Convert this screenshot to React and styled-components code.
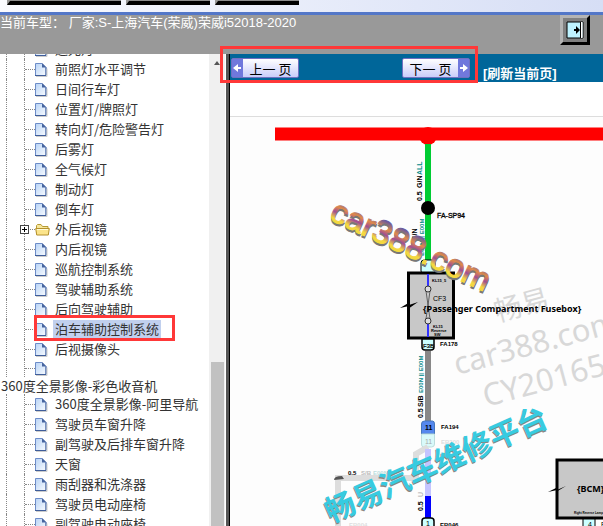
import React from 'react';
import styled, { createGlobalStyle } from 'styled-components';

const GlobalStyle = createGlobalStyle`
    * {
        box-sizing: border-box;
    }

    body {
        margin: 0;
        background: #fff;
        font-family: 'Liberation Sans', 'Noto Sans CJK SC', sans-serif;
        font-size: 13px;
        color: #333;
    }
`;

const Page = styled.div`
    display: flex;
    flex-direction: column;
    height: 100vh;
    overflow: hidden;
`;

const TopStrip = styled.nav`
    display: flex;
    gap: 5px;
    flex: none;
    height: 15px;
    padding-left: 7px;
    background: linear-gradient(90deg, #fafbff, #d6def5);
    border-bottom: 3px solid #5377c8;
`;

const TabButton = styled.button`
    width: ${props => props.width};
    height: 5px;
    padding: 0;
    background: #8c8c8c;
    border: 0;
    border-bottom: 4px solid #000;
    border-left: 3px solid #999;
`;

const VehicleBar = styled.header`
    display: flex;
    justify-content: space-between;
    flex: none;
    height: 39px;
    padding-right: 13px;
    background: #999;
    color: #fff;
    line-height: 15px;
    white-space: pre;
`;

const ExitButton = styled.button`
    width: 30px;
    height: 30px;
    padding: 3px;
    background: #808080;
    border: 3px solid;
    border-color: #b4b4b4 #000 #000 #b4b4b4;

    svg {
        display: block;
    }
`;

const Frames = styled.div`
    display: flex;
    flex: 1;
    min-height: 0;
`;

const TreeFrame = styled.aside`
    display: flex;
    flex: none;
    width: 230px;
    border-right: 1px solid #000;
    box-shadow: inset -3px 0 #555;
`;

const TreeView = styled.div`
    flex: 1;
    overflow: hidden;
`;

const TreeList = styled.ul`
    margin: -15px 0 0;
    padding: 0;
    list-style: none;
    font-family: 'Noto Sans CJK SC', sans-serif;
`;

const TreeItem = styled.li`
    position: relative;
    display: flex;
    align-items: center;
    height: ${props => props.$short ? '18px' : '20px'};
    padding-left: 6px;
    white-space: nowrap;
`;

const Guides = styled.span`
    flex: none;
    align-self: stretch;
    width: 19px;
    border-left: 1px dotted #888;
    border-right: 1px dotted #888;
`;

const Branch = styled.span`
    flex: none;
    width: 10px;
    margin-top: 1px;
    border-top: 1px dotted #888;
`;

const Expander = styled.button`
    position: absolute;
    left: 20px;
    top: 6px;
    width: 9px;
    height: 9px;
    padding: 0;
    background: #fff;
    border: 1px solid #444;

    svg {
        display: block;
    }
`;

const TreeLink = styled.a`
    margin-left: ${props => props.$folder ? '2px' : '5px'};
    padding: 0 2px;
    line-height: 18px;
    color: #333;
    text-decoration: none;
    background: ${props => props.$selected ? '#c1d0ee' : 'transparent'};
`;

const WrappedLink = styled(TreeLink)`
    display: block;
    margin: 0;
    padding: 0 1px;
    line-height: 17px;
`;

const ScrollTrack = styled.div`
    flex: none;
    display: flex;
    flex-direction: column;
    align-items: center;
    width: 16px;
    margin-right: 4px;
    padding-top: 7px;
    background: #f0f0f0;
`;

const ScrollArrow = styled.span`
    border: 3px solid transparent;
    border-top: 0;
    border-bottom: 4px solid #555;
`;

const ScrollThumb = styled.div`
    width: 13px;
    flex: 1;
    margin-top: 297px;
    background: #c1c1c1;
`;

const DiagramFrame = styled.main`
    flex: 1;
    min-width: 0;
`;

const Canvas = styled.div`
    overflow: hidden;
    background: #fdfdfd;
`;

const Toolbar = styled.div`
    position: relative;
    display: flex;
    align-items: center;
    height: 28px;
    padding-left: 1px;
    background: #069;
`;

const PageButton = styled.button`
    display: flex;
    align-items: center;
    width: 68px;
    height: 20px;
    margin-right: ${props => props.$gap || '0'};
    padding: 0;
    font: 13px 'Noto Sans CJK SC', sans-serif;
    white-space: pre;
    color: #000;
    background: linear-gradient(#fff, #c9cdfa);
    border: 1px solid #7070c0;
    border-radius: 2px;

    svg {
        flex: none;
    }
`;

const PageLabel = styled.span`
    flex: 1;
    text-align: center;
`;

const RefreshLink = styled.a`
    margin-top: 8px;
    color: #fff;
    font-size: 13px;
    font-weight: bold;
    text-decoration: none;
    white-space: nowrap;
`;

const Spacer = styled.div`
    height: 35px;
    background: #fff;
    border-bottom: 1px solid #ddd;
`;

const Highlight = styled.span`
    position: absolute;
    left: ${props => props.$left};
    top: ${props => props.$top};
    width: ${props => props.$width};
    height: ${props => props.$height};
    border: 3px solid #ff3838;
    pointer-events: none;
    z-index: 1;
`;

const Diagram = styled.svg`
    display: block;
    width: 400px;
    height: 440px;
    font-family: 'Liberation Sans', sans-serif;
`;

const items = [
    { name: '近光灯' },
    { name: '前照灯水平调节' },
    { name: '日间行车灯' },
    { name: '位置灯/牌照灯' },
    { name: '转向灯/危险警告灯' },
    { name: '后雾灯' },
    { name: '全气候灯' },
    { name: '制动灯' },
    { name: '倒车灯' },
    { name: '外后视镜', folder: true },
    { name: '内后视镜' },
    { name: '巡航控制系统' },
    { name: '驾驶辅助系统' },
    { name: '后向驾驶辅助' },
    { name: '泊车辅助控制系统', selected: true },
    { name: '后视摄像头' },
    { name: '360度全景影像-彩色收音机', wrapped: true },
    { name: '360度全景影像-阿里导航' },
    { name: '驾驶员车窗升降' },
    { name: '副驾驶及后排车窗升降' },
    { name: '天窗' },
    { name: '雨刮器和洗涤器' },
    { name: '驾驶员电动座椅' },
    { name: '副驾驶电动座椅' },
];

const PageIcon = () => (
    <svg width="13" height="15" viewBox="0 0 13 15">
        <defs>
            <linearGradient id="paper" x1="0" y1="0" x2="1" y2="1">
                <stop offset="0" stopColor="#b9d4f6" />
                <stop offset="1" stopColor="#f8fbff" />
            </linearGradient>
        </defs>
        <path d="M.5 1.500h6.500l4 4v8h-10.500z" fill="url(#paper)" stroke="#6d8cc8" />
        <path d="M7 1l4.500 4.500h-4.500z" fill="#47659f" />
        <path d="M0 13.500h11v-8" fill="none" stroke="#3f5d9a" />
        <path d="M1 14.500h11v-8" fill="none" stroke="#ccc" />
    </svg>
);

const FolderIcon = () => (
    <svg width="16" height="15" viewBox="0 0 16 15">
        <path d="M1.500 12V3.500l1-1H6l1.500 2h5.500v2" fill="#f7e79a" stroke="#b79a36" />
        <path d="M.7 6.500h13.600l-1 6.500H1.700z" fill="#fbe48b" stroke="#b4902c" />
        <path d="M2 7.500h11" stroke="#fffbdc" />
    </svg>
);

const ArrowIcon = ({ right }) => (
    <svg width="11" height="18" viewBox="0 0 11 18">
        <rect width="11" height="18" fill="#7078dc" />
        <path
            d={right ? 'M2 8h3V5l5 4-5 4v-3H2z' : 'M9 8H6V5L1 9l5 4v-3h3z'}
            fill="#fff"
        />
    </svg>
);

const Tree = () => (
    <TreeList>
        {items.map(item => (
            <React.Fragment key={item.name}>
                <TreeItem $short={item.wrapped}>
                    <Guides />
                    <Branch />
                    {item.folder && (
                        <Expander aria-label="展开">
                            <svg width="7" height="7"><path d="M1 3.500h5M3.500 1v5" stroke="#000" /></svg>
                        </Expander>
                    )}
                    {item.folder ? <FolderIcon /> : <PageIcon />}
                    {!item.wrapped && (
                        <TreeLink href="#" $folder={item.folder} $selected={item.selected}>{item.name}</TreeLink>
                    )}
                    {item.selected && <Highlight $left="34px" $top="-4px" $width="141px" $height="26px" />}
                </TreeItem>
                {item.wrapped && <li><WrappedLink href="#">{item.name}</WrappedLink></li>}
            </React.Fragment>
        ))}
    </TreeList>
);

const Wiring = () => (
    <Diagram viewBox="230 117 400 440">
        <defs>
            <linearGradient id="rainbow" x1="0" y1="0" x2="0" y2="1">
                <stop offset="0.2" stopColor="#6b5a9c" />
                <stop offset="0.4" stopColor="#e08a4a" />
                <stop offset="0.55" stopColor="#a04c94" />
                <stop offset="0.72" stopColor="#f4d840" />
            </linearGradient>
        </defs>

        {/* supply rail */}
        <path d="M275 134h340" stroke="#f00" strokeWidth="13" />
        <circle cx="428" cy="136" r="9" fill="#f00" />
        <path d="M428 144v118" stroke="#0c3" strokeWidth="6" />
        <circle cx="428" cy="208" r="7" />
        <text x="437" y="218" fontSize="7" stroke="#000" strokeWidth=".3">FA-SP94</text>
        <g fontSize="7" fontWeight="bold">
            <text transform="translate(422 201) rotate(-90)">0.5</text>
            <text transform="translate(422 188) rotate(-90)">G/N</text>
            <text transform="translate(422 175) rotate(-90)" fill="#088">ALL</text>
            <text transform="translate(417 241) rotate(-90)">G/N</text>
            <text transform="translate(424 256) rotate(-90)" fill="#088" fontSize="6">E00N || E00M</text>
        </g>

        {/* fuse */}
        <rect x="421" y="260" width="14" height="14" rx="3" fill="#cff" stroke="#000" />
        <rect x="408.500" y="273" width="45" height="65" fill="#c8c8c8" stroke="#000" strokeWidth="3" />
        <path d="M428 274v12M428 324v13" stroke="#33f" strokeWidth="2" />
        <path d="M426 291l4 28M430 291l-4 28" stroke="#333" strokeWidth=".7" />
        <circle cx="428" cy="289" r="3" fill="#ddd" stroke="#333" />
        <circle cx="428" cy="321" r="3" fill="#ddd" stroke="#333" />
        <path d="M400 308l10-6-1 3 9-3-10 7 1-3z" />
        <text x="433" y="301" fontSize="7">CF3</text>
        <g fontSize="4" fontWeight="bold">
            <text x="432" y="282">KL15_5</text>
            <text x="433" y="328">KL15</text>
            <text x="431" y="332">Reverse</text>
            <text x="434" y="336">SW</text>
        </g>
        <path d="M422 339v8q0 3 3 3h6q3 0 3-3v-8z" fill="#cff" stroke="#000" strokeWidth="1.500" />
        <text x="423" y="348" fontSize="6" stroke="#000" strokeWidth=".2">F3B</text>
        <text x="440" y="346" fontSize="6" fontWeight="bold">FA178</text>

        {/* lower wires */}
        <path d="M428 351v70" stroke="#888" strokeWidth="6" />
        <g fontSize="7" fontWeight="bold">
            <text transform="translate(423 418) rotate(-90)">0.5</text>
            <text transform="translate(423 407) rotate(-90)">S/B</text>
            <text transform="translate(423 393) rotate(-90)" fill="#088" fontSize="6">E00N || E00M</text>
        </g>
        <path d="M421.500 434v-10q0-3 3-3h8q2 0 2 3v10z" fill="#58e" stroke="#47b" />
        <path d="M421.500 434h13v10q0 3-3 3h-8q-2 0-2-3z" fill="#d9fafa" stroke="#bdd" />
        <text x="425" y="430" fontSize="7" fontWeight="bold">11</text>
        <text x="425" y="444" fontSize="7" fill="#aaa">11</text>
        <text x="441" y="429" fontSize="6" fontWeight="bold">FA194</text>
        <text x="441" y="444" fontSize="6" fontWeight="bold" fill="#ddd">EB200</text>
        <path d="M338 526v-48h78v-24l12-7" fill="none" stroke="#ddd" strokeWidth="6" />
        <path d="M334 480q0-4 8-4l2 3z" fill="#555" />
        <g fontSize="6" fontWeight="bold">
            <text x="348" y="475">0.5</text>
            <text x="361" y="475" fill="#bbb">S/B</text>
            <text x="373" y="475" fill="#bdd">E00N</text>
            <text x="349" y="527" fill="#ddd">EB004</text>
        </g>
        <path d="M428 449v48" stroke="#c4c4ff" strokeWidth="6" />
        <path d="M428 496v22" stroke="#00f" strokeWidth="6" />
        <text transform="translate(423 511) rotate(-90)" fontSize="7" fontWeight="bold">0.5</text>
        <text transform="translate(423 497) rotate(-90)" fontSize="7" fill="#aaa">U</text>
        <path d="M422 532v-11q0-3 3-3h6q3 0 3 3v11z" fill="#cff" stroke="#000" strokeWidth="1.500" />
        <text x="426" y="526" fontSize="7">1</text>
        <text x="440" y="527" fontSize="6" fontWeight="bold">EB046</text>

        {/* body control module */}
        <rect x="557" y="460" width="70" height="58" fill="#c8c8c8" stroke="#000" strokeWidth="3" />
        <path d="M548 492l10-5-1 3 9-4-10 6 1-2z" />
        <text x="577" y="492" fontSize="9" fontWeight="bold" fontFamily="Noto Sans">{'{BCM}'}</text>
        <text x="574" y="514" fontSize="3" fontWeight="bold">Right Reverse Lamp</text>
        <rect x="583" y="519" width="12" height="14" fill="#cff" stroke="#000" />
        <text x="588" y="527" fontSize="7">4</text>
        <text x="601" y="527" fontSize="7">E</text>

        {/* watermarks */}
        <g fill="#d8d8d8" fontFamily="Noto Sans, Noto Sans CJK SC">
            <text transform="translate(497 322) rotate(-15)" fontSize="28">畅易</text>
            <text transform="translate(457 375) rotate(-15)" fontSize="31">car388.com</text>
            <text transform="translate(486 407) rotate(-15)" fontSize="31">CY20165</text>
        </g>
        <text x="423" y="312" fontSize="9" fontWeight="bold" fontFamily="Noto Sans">{'{Passenger Compartment Fusebox}'}</text>
        <g transform="translate(328 219) rotate(25)" fontSize="33">
            <text x="1" y="2" fill="#777" stroke="#777">car388.com</text>
            <text fill="url(#rainbow)" stroke="url(#rainbow)">car388.com</text>
        </g>
        <g transform="translate(331 523) rotate(-24)" fontSize="30" fontWeight="bold" fontFamily="Noto Sans CJK SC">
            <text x="-1" y="1" fill="#8b8580">畅易汽车维修平台</text>
            <text fill="#37cbe0">畅易汽车维修平台</text>
        </g>
    </Diagram>
);

export default function App() {
    return (
        <Page>
            <GlobalStyle />
            <TopStrip>
                <TabButton width="114px" aria-label="资料" />
                <TabButton width="84px" aria-label="车型" />
                <TabButton width="84px" aria-label="返回" />
            </TopStrip>
            <VehicleBar>
                <span>当前车型：{' '}厂家:S-上海汽车(荣威)荣威i52018-2020</span>
                <ExitButton aria-label="退出">
                    <svg width="18" height="18" viewBox="0 0 18 18">
                        <path d="M1 1h16v16H1z" fill="#bff3ff" stroke="#000" />
                        <path d="M15.500 1v16" stroke="#fff" strokeWidth="2" />
                        <path d="M14.500 1v16" stroke="#000" />
                        <path d="M8 8h2V5l4 4-4 4v-3H8z" />
                    </svg>
                </ExitButton>
            </VehicleBar>
            <Frames>
                <TreeFrame>
                    <TreeView>
                        <Tree />
                    </TreeView>
                    <ScrollTrack>
                        <ScrollArrow />
                        <ScrollThumb />
                    </ScrollTrack>
                </TreeFrame>
                <DiagramFrame>
                    <Toolbar>
                        <PageButton $gap="103px">
                            <ArrowIcon />
                            <PageLabel>上一 页</PageLabel>
                        </PageButton>
                        <PageButton $gap="13px">
                            <PageLabel>下一 页</PageLabel>
                            <ArrowIcon right />
                        </PageButton>
                        <RefreshLink href="#">[刷新当前页]</RefreshLink>
                        <Highlight $left="-10px" $top="-8px" $width="258px" $height="37px" />
                    </Toolbar>
                    <Canvas>
                        <Spacer />
                        <Wiring />
                    </Canvas>
                </DiagramFrame>
            </Frames>
        </Page>
    );
}
